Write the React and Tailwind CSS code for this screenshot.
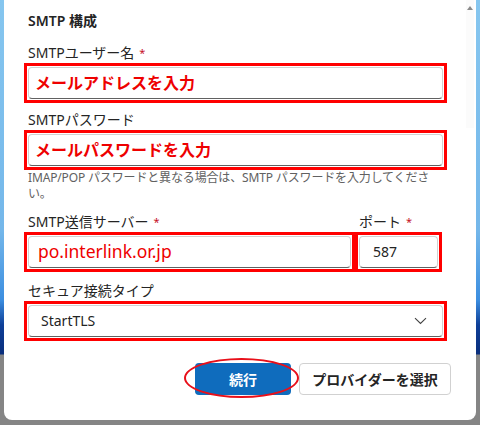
import React from "react";

const font = { fontFamily: '"Noto Sans", "Noto Sans CJK JP", sans-serif' };

function Label({ children, required, className = "" }) {
  return (
    <div className={`h-[20px] leading-[20px] text-[14px] text-[#242424] pl-[4px] whitespace-nowrap ${className}`}>
      {children}
      {required && <span className="ml-[5px] text-[11px] text-[#c50f1f] align-top">*</span>}
    </div>
  );
}

function RedBox({ className = "", children }) {
  return (
    <div className={`h-[40px] border-[3px] border-[#ff0000] p-[1px] ${className}`}>
      <div className="h-[32px] w-full rounded-[4px] border border-[#d1d1d1] border-b-[#616161] bg-white flex items-center">
        {children}
      </div>
    </div>
  );
}

export default function App() {
  return (
    <div
      style={font}
      className="relative w-[480px] h-[425px] overflow-hidden bg-[linear-gradient(to_bottom,#86c6ef_0px,#74b7ea_230px,#3c8ee0_300px,#0e3f98_325px,#0a2f7c_354px,#858585_355px)]"
    >
      <div className="relative ml-[4px] w-[472px] h-[420px] bg-white rounded-b-[8px] pl-[20px] pr-[25px] pt-[11px]">
        {/* scrollbar */}
        <div className="absolute right-[2px] top-0 w-[8px] h-[128px] bg-[#fbfbfb]" />
        <div className="absolute right-[3px] top-[6px] w-0 h-0 border-l-[3px] border-r-[3px] border-b-[4px] border-l-transparent border-r-transparent border-b-[#8a8a8a]" />

        <div className="h-[20px] leading-[20px] text-[14px] font-semibold text-[#242424] pl-[4px]">SMTP 構成</div>

        <Label required className="mt-[12px]">SMTPユーザー名</Label>
        <RedBox className="w-[423px]">
          <span className="pl-[6px] text-[16px] font-bold text-[#ee0000] leading-none">メールアドレスを入力</span>
        </RedBox>

        <Label className="mt-[7px]">SMTPパスワード</Label>
        <RedBox className="w-[423px]">
          <span className="pl-[6px] text-[16px] font-bold text-[#ee0000] leading-none">メールパスワードを入力</span>
        </RedBox>
        <div className="pl-[4px] text-[12px] leading-[16px] tracking-[-0.15px] text-[#616161] mt-[0px]">
          <div className="whitespace-nowrap">IMAP/POP パスワードと異なる場合は、SMTP パスワードを入力してくださ</div>
          <div>い。</div>
        </div>

        <div className="flex mt-[10px]">
          <div className="w-[331px]">
            <Label required>SMTP送信サーバー</Label>
            <RedBox className="w-[331px]">
              <span className="pl-[9px] text-[17.5px] text-[#ee0000] leading-none">po.interlink.or.jp</span>
            </RedBox>
          </div>
          <div className="w-[87px]">
            <Label required className="pl-[3px]">ポート</Label>
            <RedBox className="w-[87px]">
              <span className="pl-[13px] text-[14px] text-[#242424] leading-none">587</span>
            </RedBox>
          </div>
        </div>

        <Label className="mt-[9px]">セキュア接続タイプ</Label>
        <RedBox className="w-[423px]">
          <div className="flex w-full items-center justify-between pl-[12px] pr-[15px]">
            <span className="text-[14px] text-[#242424] leading-none">StartTLS</span>
            <svg width="13" height="8" viewBox="0 0 13 8" fill="none">
              <path d="M1 1.2 L6.5 6.5 L12 1.2" stroke="#424242" strokeWidth="1.1" />
            </svg>
          </div>
        </RedBox>

        <div className="flex justify-end gap-[8px] mt-[22px]">
          <div className="relative">
            <button className="w-[96px] h-[32px] rounded-[4px] bg-[#0f6cbd] text-white text-[14px] font-bold">続行</button>
            <div className="absolute left-[-11px] right-[-8px] top-[-5px] bottom-[-3px] rounded-[50%] border-2 border-[#e8101a]" />
          </div>
          <button className="w-[152px] h-[32px] rounded-[4px] border border-[#d1d1d1] bg-white text-[14px] font-bold text-[#242424]">
            プロバイダーを選択
          </button>
        </div>
      </div>
    </div>
  );
}
